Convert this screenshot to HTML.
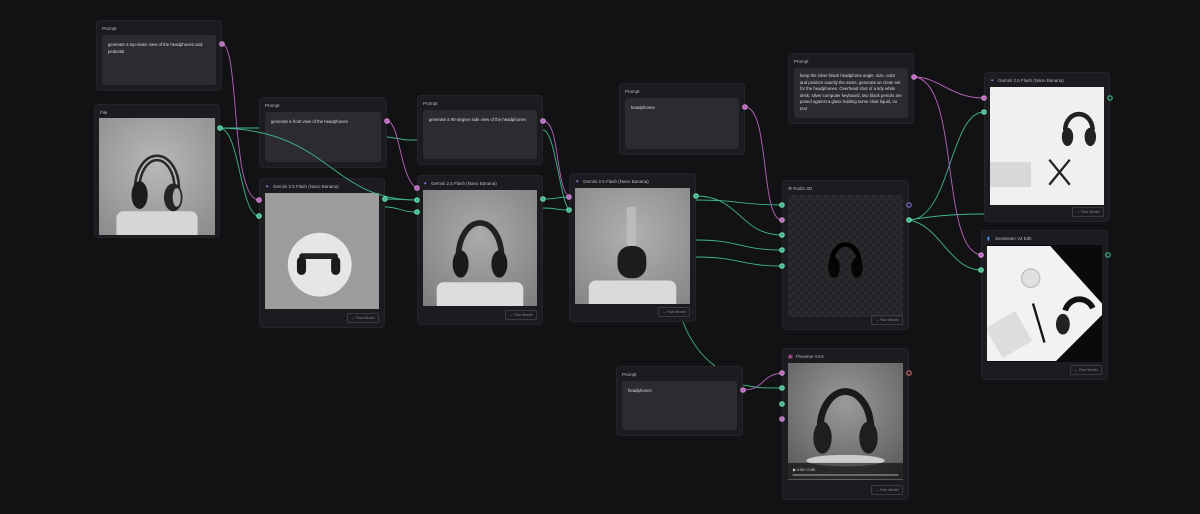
<!DOCTYPE html>
<html><head><meta charset="utf-8"><style>
*{box-sizing:border-box;margin:0;padding:0}
body{width:1200px;height:514px;overflow:hidden;background:#121215;font-family:"Liberation Sans",sans-serif;position:relative}
.n{position:absolute;background:#1c1c20;border-radius:4px;border:1px solid #232328}
.t{position:absolute;left:5px;top:5px;font-size:4.5px;color:#bbb;white-space:nowrap}
.tb{position:absolute;left:5px;right:5px;top:14px;bottom:5px;background:#2b2b30;border-radius:3px;padding:7px 6px;font-size:4.3px;line-height:6.6px;color:#ddd}
.img{position:absolute;left:5px;right:5px;top:14px;overflow:hidden}
.btn{position:absolute;right:5px;bottom:4px;width:32px;height:10px;border:1px solid #3a3a40;border-radius:2px;font-size:3.8px;color:#888;text-align:center;line-height:8px}
.ic{display:inline-block;width:5px;color:#a07be0;font-size:5px;margin-right:3px}
svg.w{position:absolute;left:0;top:0}
</style></head><body>

<div class="n" style="left:96px;top:20px;width:126px;height:71px"><div class="t">Prompt</div><div class="tb">generate a top-down view of the headphones and pedestal</div></div>

<div class="n" style="left:94px;top:104px;width:126px;height:134px"><div class="t">File</div>
<div class="img" style="left:4px;right:4px;top:13px;height:117px;background:radial-gradient(circle at 50% 40%,#b8b8b8,#8a8a8a)">
<svg viewBox="0 0 100 100" width="100%" height="100%"><rect x="15" y="80" width="70" height="30" rx="6" fill="#d6d6d6"/><path d="M33 60 A17 26 0 0 1 67 60" stroke="#2a2a2a" stroke-width="6" fill="none"/><path d="M33 60 A17 26 0 0 1 67 60" stroke="#bbb" stroke-width="1.5" fill="none"/><ellipse cx="35" cy="66" rx="7" ry="12" fill="#1c1c1c"/><ellipse cx="64" cy="68" rx="8" ry="12" fill="#252525"/><ellipse cx="67" cy="68" rx="3.5" ry="8" fill="#aaa"/></svg></div></div>

<div class="n" style="left:259px;top:97px;width:128px;height:71px"><div class="t">Prompt</div><div class="tb">generate a front view of the headphones</div></div>

<div class="n" style="left:259px;top:178px;width:126px;height:150px"><div class="t"><span class="ic">✦</span>Gemini 2.5 Flash (Nano Banana)</div>
<div class="img" style="height:116px;background:#9c9c9c"><svg viewBox="0 0 100 100" width="100%" height="100%"><circle cx="48" cy="62" r="28" fill="#e6e6e6"/><rect x="30" y="52" width="34" height="5" rx="2.5" fill="#222"/><rect x="28" y="55" width="8" height="16" rx="4" fill="#1a1a1a"/><rect x="58" y="55" width="8" height="16" rx="4" fill="#1a1a1a"/></svg></div><div class="btn">→ Run Model</div></div>

<div class="n" style="left:417px;top:95px;width:126px;height:70px"><div class="t">Prompt</div><div class="tb">generate a 90-degree side view of the headphones</div></div>

<div class="n" style="left:417px;top:175px;width:126px;height:150px"><div class="t"><span class="ic">✦</span>Gemini 2.5 Flash (Nano Banana)</div>
<div class="img" style="height:116px;background:radial-gradient(circle at 50% 40%,#aaa,#7d7d7d)"><svg viewBox="0 0 100 100" width="100%" height="100%"><rect x="12" y="80" width="76" height="30" rx="6" fill="#dcdcdc"/><path d="M31 58 A19 30 0 0 1 69 58" stroke="#222" stroke-width="5" fill="none"/><ellipse cx="33" cy="64" rx="7" ry="12" fill="#1a1a1a"/><ellipse cx="67" cy="64" rx="7" ry="12" fill="#1a1a1a"/></svg></div><div class="btn">→ Run Model</div></div>

<div class="n" style="left:619px;top:83px;width:126px;height:72px"><div class="t">Prompt</div><div class="tb">headphones</div></div>

<div class="n" style="left:569px;top:173px;width:127px;height:149px"><div class="t"><span class="ic">✦</span>Gemini 2.5 Flash (Nano Banana)</div>
<div class="img" style="height:116px;background:radial-gradient(circle at 50% 40%,#b0b0b0,#858585)"><svg viewBox="0 0 100 100" width="100%" height="100%"><rect x="12" y="80" width="76" height="30" rx="6" fill="#dadada"/><rect x="45" y="16" width="8" height="38" rx="2" fill="#bbb"/><rect x="37" y="50" width="25" height="28" rx="11" fill="#1c1c1c"/></svg></div><div class="btn">→ Run Model</div></div>

<div class="n" style="left:788px;top:53px;width:126px;height:71px"><div class="t">Prompt</div><div class="tb" style="padding:5px 6px">keep the silver-black headphone angle, size, color and position exactly the same, generate an clean set for the headphones. Overhead shot of a tidy white desk, silver computer keyboard, two black pencils are posed against a glass holding some clear liquid, no text</div></div>

<div class="n" style="left:782px;top:180px;width:127px;height:150px"><div class="t">⚙ Rodin 3D</div>
<div class="img" style="height:122px;background-color:#232326;background-image:linear-gradient(45deg,#2a2a2e 25%,transparent 25%,transparent 75%,#2a2a2e 75%),linear-gradient(45deg,#2a2a2e 25%,transparent 25%,transparent 75%,#2a2a2e 75%);background-size:8px 8px;background-position:0 0,4px 4px"><svg viewBox="0 0 100 100" width="100%" height="100%"><path d="M38 56 A12 16 0 0 1 62 56" stroke="#000" stroke-width="4" fill="none"/><ellipse cx="40" cy="60" rx="5" ry="9" fill="#050505"/><ellipse cx="60" cy="60" rx="5" ry="9" fill="#050505"/></svg></div><div class="btn">→ Run Model</div></div>

<div class="n" style="left:984px;top:72px;width:126px;height:150px"><div class="t"><span class="ic">✦</span>Gemini 2.5 Flash (Nano Banana)</div>
<div class="img" style="height:118px;background:#f0f0f0"><svg viewBox="0 0 100 100" width="100%" height="100%"><rect x="0" y="64" width="36" height="22" fill="#d8d8d8"/><path d="M52 62 L70 84 M70 62 L52 84" stroke="#222" stroke-width="2"/><path d="M66 36 A12 14 0 0 1 90 36" stroke="#222" stroke-width="4" fill="none"/><ellipse cx="68" cy="42" rx="5" ry="8" fill="#222"/><ellipse cx="88" cy="42" rx="5" ry="8" fill="#222"/></svg></div><div class="btn">→ Run Model</div></div>

<div class="n" style="left:981px;top:230px;width:127px;height:150px"><div class="t"><span class="ic" style="color:#4a90e0">▮</span>Seedream V4 Edit</div>
<div class="img" style="height:117px;background:#0a0a0a"><svg viewBox="0 0 100 100" width="100%" height="100%"><polygon points="0,0 55,0 100,50 100,60 60,100 0,100" fill="#f2f2f2"/><rect x="4" y="62" width="30" height="30" fill="#ddd" transform="rotate(-30 19 77)"/><circle cx="38" cy="28" r="8" fill="#e0e0e0" stroke="#bbb"/><path d="M68 56 A13 14 0 0 1 92 54" stroke="#111" stroke-width="5" fill="none"/><ellipse cx="66" cy="68" rx="6" ry="9" fill="#222"/><path d="M40 50 L50 84" stroke="#111" stroke-width="2"/></svg></div><div class="btn">→ Run Model</div></div>

<div class="n" style="left:616px;top:366px;width:127px;height:70px"><div class="t">Prompt</div><div class="tb">headphones</div></div>

<div class="n" style="left:782px;top:348px;width:127px;height:152px"><div class="t"><span class="ic" style="color:#d050a0">▣</span>Pixverse V4.5</div>
<div class="img" style="height:117px;background:radial-gradient(circle at 50% 35%,#9a9a9a,#555)"><svg viewBox="0 0 100 100" width="100%" height="100%"><ellipse cx="50" cy="84" rx="34" ry="5" fill="#ccc"/><path d="M28 56 A22 32 0 0 1 72 56" stroke="#1a1a1a" stroke-width="6" fill="none"/><ellipse cx="30" cy="64" rx="8" ry="14" fill="#1e1e1e"/><ellipse cx="70" cy="64" rx="8" ry="14" fill="#1e1e1e"/><rect x="0" y="86" width="100" height="14" fill="#000" opacity=".6"/><rect x="4" y="96" width="92" height="1" fill="#999"/></svg><div style="position:absolute;left:5px;bottom:8px;font-size:3.8px;color:#ddd">▶ 0:00 / 0:05</div></div><div class="btn">→ Run Model</div></div>

<svg class="w" width="1200" height="514" fill="none" stroke-width="0.9">
<g stroke="#3fb58a">
<path d="M220 128 C240 128 240 128 259 128"/>
<path d="M220 128 C240 130 240 215 259 216"/>
<path d="M220 128 C330 130 330 200 417 200"/>
<path d="M385 199 C400 199 400 200 417 200"/>
<path d="M385 207 C400 207 400 212 417 212"/>
<path d="M387 137 C410 140 400 140 417 140"/>
<path d="M543 199 C560 199 555 197 569 197"/>
<path d="M543 208 C558 208 555 210 569 210"/>
<path d="M696 200 C740 200 740 205 782 205"/>
<path d="M696 196 C740 196 740 235 782 235"/>
<path d="M696 240 C740 240 740 250 782 250"/>
<path d="M696 257 C740 257 740 266 782 266"/>
<path d="M683 322 C690 340 700 355 715 366"/>
<path d="M743 385 C760 388 760 388 782 388"/>
<path d="M909 220 C950 220 950 112 984 112"/>
<path d="M909 220 C940 215 960 214 984 214"/>
<path d="M909 220 C940 225 950 270 981 270"/>
<path d="M543 130 C555 130 560 200 569 210"/>
</g>
<g stroke="#b565b8">
<path d="M222 44 C240 44 230 200 259 200"/>
<path d="M387 121 C400 121 400 180 417 188"/>
<path d="M543 121 C560 121 555 185 569 197"/>
<path d="M745 107 C770 107 760 220 782 220"/>
<path d="M914 77 C940 77 950 98 984 98"/>
<path d="M914 77 C960 80 940 250 981 255"/>
<path d="M743 390 C765 390 760 375 782 373"/>
</g>
<g stroke-width="1.2">
<circle cx="222" cy="44" r="2.2" fill="#b565b8" stroke="#d08ad0"/>
<circle cx="220" cy="128" r="2.2" fill="#3fb58a" stroke="#6fd9ac"/>
<circle cx="259" cy="200" r="2.2" fill="#b565b8" stroke="#d08ad0"/>
<circle cx="259" cy="216" r="2.2" fill="#3fb58a" stroke="#6fd9ac"/>
<circle cx="387" cy="121" r="2.2" fill="#b565b8" stroke="#d08ad0"/>
<circle cx="385" cy="199" r="2.2" fill="#3fb58a" stroke="#6fd9ac"/>
<circle cx="417" cy="188" r="2.2" fill="#b565b8" stroke="#d08ad0"/>
<circle cx="417" cy="200" r="2.2" fill="#3fb58a" stroke="#6fd9ac"/>
<circle cx="417" cy="212" r="2.2" fill="#3fb58a" stroke="#6fd9ac"/>
<circle cx="543" cy="121" r="2.2" fill="#b565b8" stroke="#d08ad0"/>
<circle cx="543" cy="199" r="2.2" fill="#3fb58a" stroke="#6fd9ac"/>
<circle cx="569" cy="197" r="2.2" fill="#b565b8" stroke="#d08ad0"/>
<circle cx="569" cy="210" r="2.2" fill="#3fb58a" stroke="#6fd9ac"/>
<circle cx="696" cy="196" r="2.2" fill="#3fb58a" stroke="#6fd9ac"/>
<circle cx="745" cy="107" r="2.2" fill="#b565b8" stroke="#d08ad0"/>
<circle cx="782" cy="205" r="2.2" fill="#3fb58a" stroke="#6fd9ac"/>
<circle cx="782" cy="220" r="2.2" fill="#b565b8" stroke="#d08ad0"/>
<circle cx="782" cy="235" r="2.2" fill="#3fb58a" stroke="#6fd9ac"/>
<circle cx="782" cy="250" r="2.2" fill="#3fb58a" stroke="#6fd9ac"/>
<circle cx="782" cy="266" r="2.2" fill="#3fb58a" stroke="#6fd9ac"/>
<circle cx="909" cy="205" r="2.2" fill="none" stroke="#7a6ad0"/>
<circle cx="909" cy="220" r="2.2" fill="#3fb58a" stroke="#6fd9ac"/>
<circle cx="914" cy="77" r="2.2" fill="#b565b8" stroke="#d08ad0"/>
<circle cx="984" cy="98" r="2.2" fill="#b565b8" stroke="#d08ad0"/>
<circle cx="984" cy="112" r="2.2" fill="#3fb58a" stroke="#6fd9ac"/>
<circle cx="1110" cy="98" r="2.2" fill="none" stroke="#3fb58a"/>
<circle cx="981" cy="255" r="2.2" fill="#b565b8" stroke="#d08ad0"/>
<circle cx="981" cy="270" r="2.2" fill="#3fb58a" stroke="#6fd9ac"/>
<circle cx="1108" cy="255" r="2.2" fill="none" stroke="#3fb58a"/>
<circle cx="743" cy="390" r="2.2" fill="#b565b8" stroke="#d08ad0"/>
<circle cx="782" cy="373" r="2.2" fill="#b565b8" stroke="#d08ad0"/>
<circle cx="782" cy="388" r="2.2" fill="#3fb58a" stroke="#6fd9ac"/>
<circle cx="782" cy="404" r="2.2" fill="#3fb58a" stroke="#6fd9ac"/>
<circle cx="782" cy="419" r="2.2" fill="#b565b8" stroke="#d08ad0"/>
<circle cx="909" cy="373" r="2.2" fill="none" stroke="#d06070"/>
</g>
</svg>
</body></html>
